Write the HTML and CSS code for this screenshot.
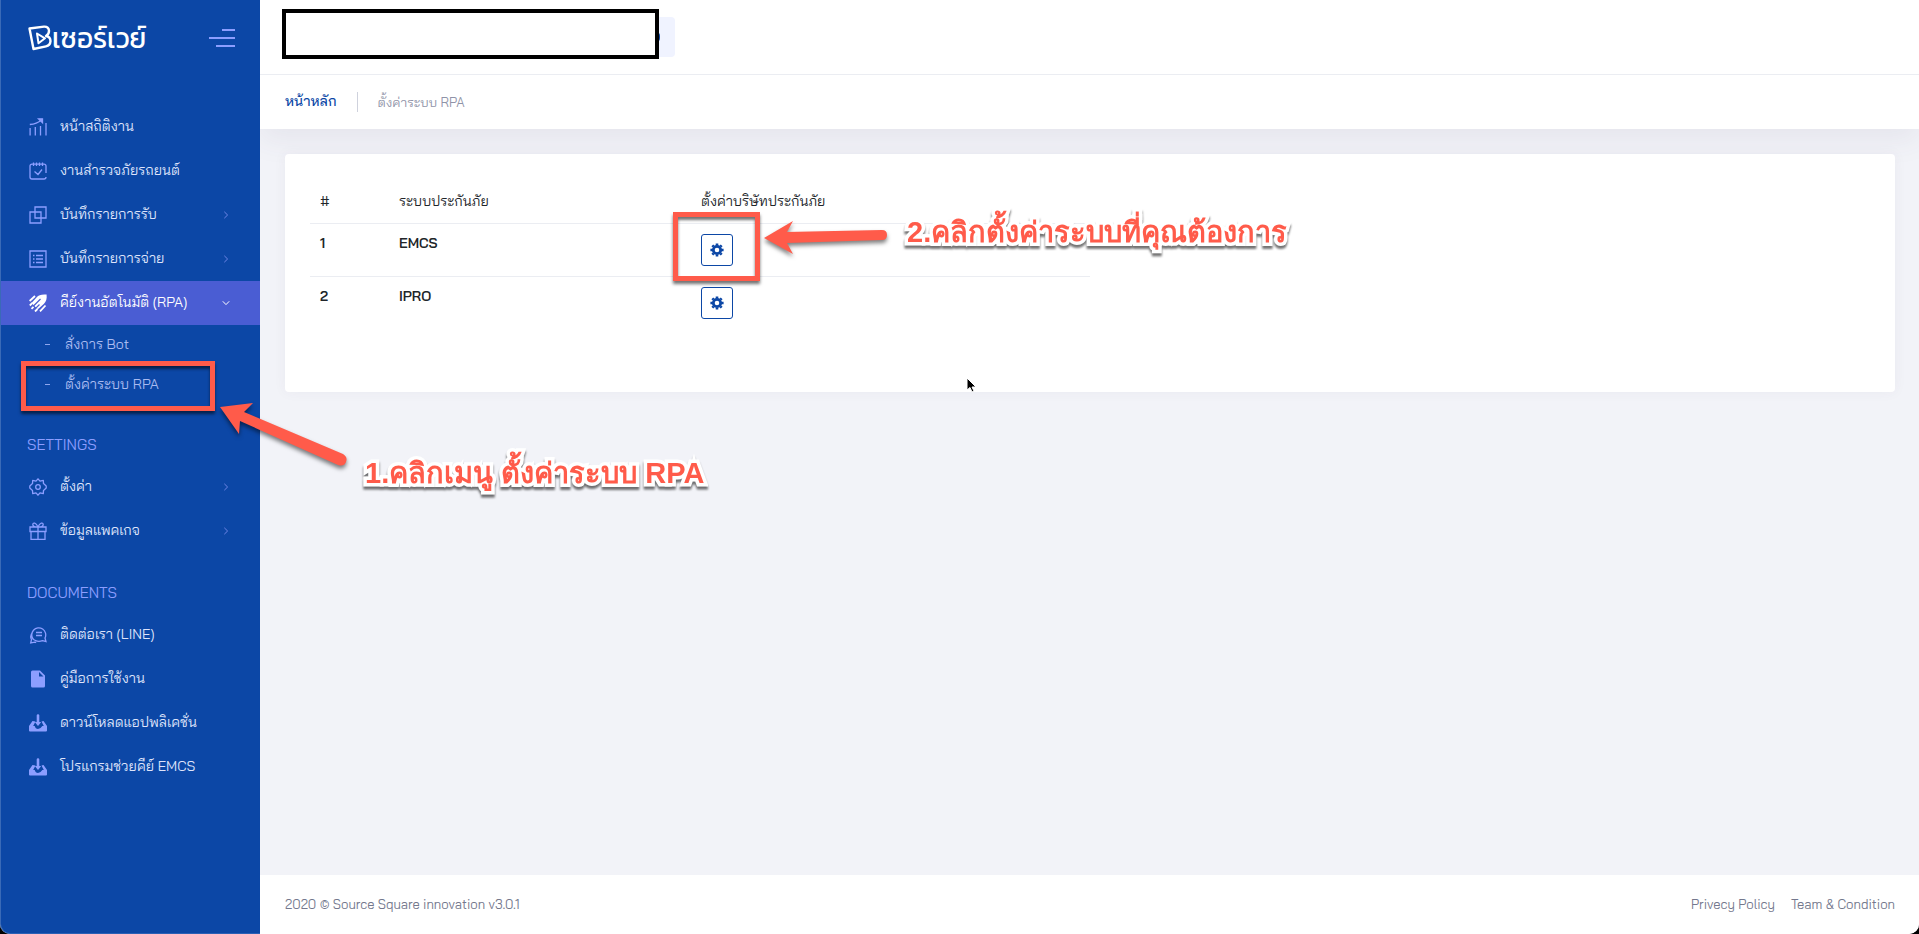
FILE: index.html
```html
<!DOCTYPE html>
<html lang="th">
<head>
  <meta charset="UTF-8">
  <meta name="viewport" content="width=device-width, initial-scale=1.0">
  <title>ตั้งค่าระบบ RPA</title>
  <link rel="stylesheet" href="styles.css">
</head>
<body>
  <svg class="sprite" aria-hidden="true">
    <symbol id="chevron" viewBox="0 0 8 8"><path d="M2.3.8 5.6 4 2.3 7.2" fill="none" stroke="currentColor"/></symbol>
    <symbol id="inbox" viewBox="0 0 18 18">
      <path d="M3.500 7 0 12v4.500q0 1 1 1h16q1 0 1-1V12l-3.500-5-2 .6 2.300 4.400h-1.500Q11.500 15 9 15t-3.300-3H4.200l2.300-4.400z" fill="currentColor"/>
      <path d="M9 1.500v6" stroke="currentColor" stroke-width="2.600" stroke-linecap="round"/>
      <path d="M5.800 8h6.400L9 12z" fill="currentColor"/>
    </symbol>
    <symbol id="cog" viewBox="0 0 14 14">
      <g stroke="currentColor" fill="none">
        <circle cx="7" cy="7" r="3.700" stroke-width="2.800"/>
        <path d="M7 .4v2M7 11.600v2M.4 7h2M11.600 7h2M2.300 2.300l1.400 1.400M10.300 10.300l1.400 1.400M2.300 11.700l1.400-1.400M10.300 3.700l1.400-1.400" stroke-width="2.600"/>
      </g>
    </symbol>
  </svg>

  <div class="page">
    <aside class="sidebar">
      <div class="brand">
        <a class="logo" href="#">
          <svg width="24" height="26" viewBox="0 0 24 26" fill="none" stroke="#fff" stroke-width="2.400" stroke-linejoin="round">
            <path d="M1.500 3.500 16 1.600q4.500-.2 5 4 .2 3.500-3 5.400 4.500.8 4.500 5.200-.3 4.300-4.500 5.200L5.500 24z"/>
            <path d="m9 8.500 8 4.800-6.500 5z" stroke-width="2"/>
          </svg>
          <span>เซอร์เวย์</span>
        </a>
        <button class="toggle" type="button" aria-label="เมนู"><span></span><span></span><span></span></button>
      </div>

      <nav>
        <ul class="menu">
          <li><a href="#">
            <svg class="icon" viewBox="0 0 18 18" fill="none" stroke="currentColor" stroke-width="1.300"><path d="M1.100 10v7.500M6.300 9v8.500M11.500 8v9.500M17 5v12.500M.8 6.500C5 6.200 9 5 12.500 2"/><path d="M9.500.8h4v4z" fill="currentColor"/></svg>
            <span>หน้าสถิติงาน</span></a></li>
          <li><a href="#">
            <svg class="icon" viewBox="0 0 18 18" fill="none" stroke="currentColor" stroke-width="1.300"><path d="M17 11V4q0-1.800-2-1.800H3Q1 2.200 1 4v11q0 2 2 2h12q2 0 2-2M4.500.5v3.400M7.500.5v3.400M10.500.5v3.400M13.500.5v3.400M5.500 9.500 9 12.500l4-5"/></svg>
            <span>งานสำรวจภัยรถยนต์</span></a></li>
          <li><a href="#">
            <svg class="icon" viewBox="0 0 18 18" fill="none" stroke="currentColor" stroke-width="1.300"><path d="M6 1h11v11H6zM1 6h11v11H1z"/></svg>
            <span>บันทึกรายการรับ</span><svg class="arrow"><use href="#chevron"/></svg></a></li>
          <li><a href="#">
            <svg class="icon" viewBox="0 0 18 18" fill="none" stroke="currentColor" stroke-width="1.300"><path d="M1 1h16v16H1zM4 5.500h1.500M4 9h1.500M4 12.500h1.500M7 5.500h7M7 9h7M7 12.500h7"/></svg>
            <span>บันทึกรายการจ่าย</span><svg class="arrow"><use href="#chevron"/></svg></a></li>
          <li class="active"><a href="#">
            <svg class="icon" viewBox="0 0 18 18" fill="none" stroke="currentColor" stroke-width="1.800"><path d="M17.600.6C12.500.2 9.800 1 7.500 3.400L2.500 9l6.300 6.300L14.800 10c2.500-2.400 3.200-5 2.800-9.400z" fill="currentColor" stroke="none"/><path d="M4 12.500 11.500 5M6.500 14.500l4-4" stroke="#4a5dd3" stroke-width="1.200"/><path d="M.6 7 6 2M.8 11.500l2.500-2.500M2.500 14.800l2-2M6 17.500l2.500-2.500M11 17.400l5.500-5.900"/></svg>
            <span>คีย์งานอัตโนมัติ (RPA)</span><svg class="arrow down"><use href="#chevron"/></svg></a>
            <ul class="submenu">
              <li><a href="#">สั่งการ Bot</a></li>
              <li><a href="#">ตั้งค่าระบบ RPA</a>
                <div class="callout callout-menu">
                  <svg class="pointer" width="136" height="70" viewBox="0 0 136 70"><path d="m4 6 33-4-9 9 99 42q5 3 3 8t-8 3L24 20l-1 13z"/></svg>
                  <strong>1.คลิกเมนู ตั้งค่าระบบ RPA</strong>
                </div></li>
            </ul></li>
        </ul>

        <h2>SETTINGS</h2>
        <ul class="menu">
          <li><a href="#">
            <svg class="icon" viewBox="0 0 18 18" fill="none" stroke="currentColor" stroke-width="1.300" stroke-linejoin="round"><path d="M9 .8 11 3.200l3.300-.8.200 3.200L17.200 8v2l-2.700 2.400-.2 3.200-3.300-.8L9 17.200 7 14.800l-3.300.8-.2-3.200L.8 10V8l2.700-2.400.2-3.200 3.300.8z"/><circle cx="9" cy="9" r="2.300"/></svg>
            <span>ตั้งค่า</span><svg class="arrow"><use href="#chevron"/></svg></a></li>
          <li><a href="#">
            <svg class="icon" viewBox="0 0 18 18" fill="none" stroke="currentColor" stroke-width="1.300"><path d="M1 5h16v4.500H1zM2 9.500h14v7.800H2zM9 5v12M9 5C7 .2 4 .3 3.800 2.500 3.800 4 5 5 9 5c4 0 5.200-1 5.200-2.500C14 .3 11 .2 9 5"/></svg>
            <span>ข้อมูลแพคเกจ</span><svg class="arrow"><use href="#chevron"/></svg></a></li>
        </ul>

        <h2>DOCUMENTS</h2>
        <ul class="menu">
          <li><a href="#">
            <svg class="icon" viewBox="0 0 18 18" fill="none" stroke="currentColor" stroke-width="1.300"><path d="M4.500 13.500A7 7 0 1 1 16 12l1 3.500-3.500-.8q-4 1.500-7-.2zM7 6.500h6M7 9.500h6M3.500 6.500Q.5 10 2.500 13.500l-.8 3.500 4-.8 1.500.3"/></svg>
            <span>ติดต่อเรา (LINE)</span></a></li>
          <li><a href="#">
            <svg class="icon" viewBox="0 0 18 18" fill="currentColor" fill-rule="evenodd"><path d="M3.500.5h7.500L16 5.500v10.500q0 1.500-1.500 1.500h-11Q2 17.500 2 16V2Q2 .5 3.500.5zM10 2v4.500h4.500z"/></svg>
            <span>คู่มือการใช้งาน</span></a></li>
          <li><a href="#"><svg class="icon"><use href="#inbox"/></svg><span>ดาวน์โหลดแอปพลิเคชั่น</span></a></li>
          <li><a href="#"><svg class="icon"><use href="#inbox"/></svg><span>โปรแกรมช่วยคีย์ EMCS</span></a></li>
        </ul>
      </nav>
    </aside>

    <div class="wrapper">
      <header class="topbar">
        <button class="account" type="button" aria-label="บัญชี"></button>
        <div class="cover"></div>
      </header>
      <div class="subheader">
        <a href="#">หน้าหลัก</a>
        <span class="separator"></span>
        <span>ตั้งค่าระบบ RPA</span>
      </div>

      <main>
        <section class="card">
          <table>
            <thead>
              <tr><th class="col-no">#</th><th class="col-name">ระบบประกันภัย</th><th>ตั้งค่าบริษัทประกันภัย</th></tr>
            </thead>
            <tbody>
              <tr>
                <td>1</td>
                <td>EMCS</td>
                <td>
                  <div class="action">
                    <button class="config" type="button" aria-label="ตั้งค่า EMCS"><svg><use href="#cog"/></svg></button>
                    <div class="callout callout-config">
                      <svg class="pointer" width="130" height="42" viewBox="0 0 130 42"><path d="M4 21 33 4l-6 11 95-2q5 0 5 5t-5 5l-95 3 6 11z"/></svg>
                      <strong>2.คลิกตั้งค่าระบบที่คุณต้องการ</strong>
                    </div>
                  </div>
                </td>
              </tr>
              <tr>
                <td>2</td>
                <td>IPRO</td>
                <td><div class="action"><button class="config" type="button" aria-label="ตั้งค่า IPRO"><svg><use href="#cog"/></svg></button></div></td>
              </tr>
            </tbody>
          </table>
          <svg class="cursor" width="12" height="18" viewBox="0 0 12 18"><path d="M1 1v12l3-2.500L6 15l2-1-2-4h4z" stroke="#fff"/></svg>
        </section>
      </main>

      <footer>
        <span>2020 © Source Square innovation v3.0.1</span>
        <div class="links"><a href="#">Privecy Policy</a><a href="#">Team &amp; Condition</a></div>
      </footer>
    </div>
  </div>
</body>
</html>
```
FILE: styles.css
```css
* {
  box-sizing: border-box;
}
body {
  margin: 0;
  background: #000;
  font-family: "Bai Jamjuree", Inter, "Noto Sans Thai", sans-serif;
  font-size: 13px;
  color: #212529;
}
a {
  color: inherit;
  text-decoration: none;
}
ul {
  list-style: none;
  margin: 0;
  padding: 0;
}
button {
  font: inherit;
  cursor: pointer;
}
.sprite {
  position: absolute;
  width: 0;
  height: 0;
}
.page {
  display: flex;
  min-height: 100vh;
  background: #f2f3f8;
  border-radius: 0 0 10px 10px;
}

/* sidebar */
.sidebar {
  position: relative;
  z-index: 2;
  flex: 0 0 260px;
  background: #0c47a6;
  border-left: 1px solid #3a6ab7;
  border-bottom: 1px solid #2a60b5;
  border-bottom-left-radius: 10px;
}
.brand {
  display: flex;
  align-items: center;
  justify-content: space-between;
  height: 75px;
  padding: 0 25px 0 27px;
}
.logo {
  display: flex;
  align-items: center;
  color: #fff;
  font-family: Kanit, Prompt, "Bai Jamjuree", "Noto Sans Thai", sans-serif;
  font-size: 28px;
  font-weight: 400;
  line-height: 40px;
}
.toggle {
  display: flex;
  flex-direction: column;
  align-items: flex-end;
  gap: 6px;
  padding: 0;
  border: 0;
  background: none;
}
.toggle span {
  width: 26px;
  height: 2px;
  background: #8c9eff;
}
.toggle span:first-child {
  width: 13px;
}
.toggle span:last-child {
  width: 19px;
}
nav {
  padding-top: 30px;
}
.menu a {
  display: flex;
  align-items: center;
  height: 44px;
  padding: 0 30px 0 28px;
  font-size: 14px;
  line-height: 20px;
  color: #dfe4fb;
}
.menu a > span {
  flex: 1;
  padding-bottom: 2px;
  white-space: nowrap;
}
.icon {
  flex: none;
  width: 18px;
  height: 18px;
  margin-right: 13px;
  color: #8c9eff;
}
.arrow {
  width: 8px;
  height: 8px;
  color: #7086e6;
}
.arrow.down {
  transform: rotate(90deg);
}
.active > a {
  background: #4a5dd3;
  color: #fff;
}
.active > a .icon,
.active > a .arrow {
  color: #fff;
}
.submenu li {
  position: relative;
}
.submenu a {
  height: 40px;
  padding: 0 30px 2px 44px;
  color: #a9bbf0;
}
.submenu a::before {
  content: "";
  width: 5px;
  height: 1px;
  margin-right: 15px;
  background: #8fa6ee;
}
nav h2 {
  margin: 20px 0 0;
  padding-left: 26px;
  font-size: 15px;
  font-weight: 400;
  line-height: 40px;
  color: #8c9eff;
}

/* content */
.wrapper {
  flex: 1;
  display: flex;
  flex-direction: column;
  min-width: 0;
}
.topbar {
  position: relative;
  height: 75px;
  padding: 17px 25px;
  background: #fff;
  border-bottom: 1px solid #ebedf2;
}
.account {
  display: flex;
  align-items: center;
  justify-content: flex-end;
  width: 390px;
  height: 40px;
  padding: 0 15px;
  border: 0;
  border-radius: 4px;
  background: #f0f3ff;
}
.account::after {
  content: "";
  width: 8px;
  height: 10px;
  border-radius: 4px;
  background: #0c47a6;
}
.cover {
  position: absolute;
  top: 9px;
  left: 22px;
  width: 377px;
  height: 50px;
  background: #fff;
  border: 4px solid #000;
}
.subheader {
  display: flex;
  align-items: center;
  gap: 20px;
  height: 54px;
  padding: 0 25px;
  background: #fff;
  box-shadow: 0 10px 30px rgba(82, 63, 105, 0.08);
  line-height: 20px;
  color: #8f93a8;
}
.subheader a {
  padding-bottom: 2px;
  font-size: 14px;
  font-weight: 500;
  color: #0c47a6;
}
.separator {
  width: 1px;
  height: 20px;
  background: #cfd2dd;
}
main {
  flex: 1;
  padding: 25px 24px 25px 25px;
}
.card {
  position: relative;
  padding: 25px 25px 63px;
  background: #fff;
  border-radius: 4px;
  box-shadow: 0 0 13px rgba(82, 63, 105, 0.05);
}
table {
  width: 50%;
  border-collapse: collapse;
}
th,
td {
  padding: 10px;
  text-align: left;
  vertical-align: top;
  font-size: 14px;
  line-height: 18px;
}
th {
  height: 44px;
  padding-top: 13px;
  font-weight: 400;
}
td {
  border-top: 1px solid #ebedf2;
  font-weight: 600;
}
.col-no {
  width: 79px;
}
.col-name {
  width: 302px;
}
.action {
  position: relative;
  width: 32px;
}
.config {
  display: flex;
  align-items: center;
  justify-content: center;
  width: 32px;
  height: 32px;
  padding: 0;
  border: 1px solid #0c47a6;
  border-radius: 3px;
  background: #fff;
  color: #0c47a6;
}
.config svg {
  width: 14px;
  height: 14px;
}
.cursor {
  position: absolute;
  top: 223px;
  left: 681px;
}
footer {
  display: flex;
  align-items: center;
  justify-content: space-between;
  height: 59px;
  padding: 0 24px 2px 25px;
  background: #fff;
  border-bottom-right-radius: 10px;
  color: #74788d;
}
.links {
  display: flex;
  gap: 16px;
}

/* tutorial callouts */
.callout {
  position: absolute;
  z-index: 3;
  border: 5px solid #ff5b4a;
  box-shadow: 0 3px 3px rgba(0, 0, 0, 0.55), inset 0 3px 3px rgba(0, 0, 0, 0.55);
  pointer-events: none;
}
.callout-menu {
  top: -4px;
  left: 20px;
  width: 194px;
  height: 50px;
}
.callout-config {
  top: -22px;
  left: -28px;
  width: 87px;
  height: 69px;
}
.pointer {
  position: absolute;
  fill: #ff5b4a;
  filter: drop-shadow(0 3px 2px rgba(0, 0, 0, 0.5));
}
.callout-menu .pointer {
  top: 35px;
  left: 190px;
}
.callout-config .pointer {
  top: 0;
  left: 82px;
}
.callout strong {
  position: absolute;
  color: #ff5b4a;
  font-family: "Liberation Sans", sans-serif;
  font-size: 29px;
  font-weight: 700;
  line-height: 40px;
  white-space: nowrap;
  -webkit-text-stroke: 7px #fff;
  paint-order: stroke fill;
  filter: drop-shadow(0 3px 1px rgba(0, 0, 0, 0.55));
}
.callout-menu strong {
  top: 87px;
  left: 339px;
}
.callout-config strong {
  top: -5px;
  left: 229px;
}
```
